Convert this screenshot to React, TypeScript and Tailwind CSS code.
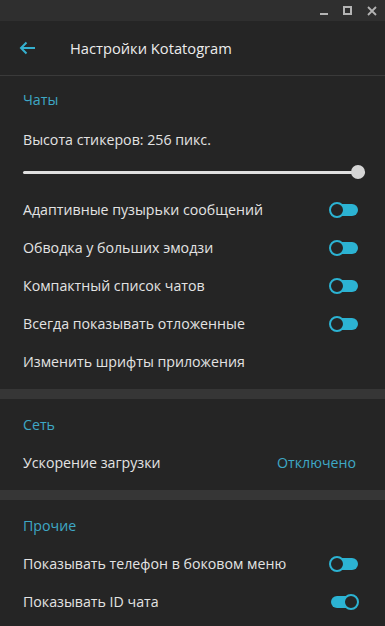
import React from "react";

const font = { fontFamily: '"Open Sans", "Noto Sans", sans-serif' };

function Toggle({ on }: { on: boolean }) {
  return (
    <div className="relative w-[30px] h-[16px] flex items-center">
      <div className="absolute left-[2px] right-[1px] h-[12px] rounded-full bg-[#2cb3d3]" />
      <div
        className={
          "absolute w-[16px] h-[16px] rounded-full border-2 border-[#2cb3d3] bg-[#252525] " +
          (on ? "right-0" : "left-0")
        }
      />
    </div>
  );
}

function ToggleRow({ label, on }: { label: string; on: boolean }) {
  return (
    <div className="h-[38px] flex items-center justify-between pl-[23px] pr-[26px]">
      <span className="text-[14.2px] text-[#e3e3e3]">{label}</span>
      <Toggle on={on} />
    </div>
  );
}

function SectionTitle({ children, first }: { children: React.ReactNode; first?: boolean }) {
  return (
    <div className={"h-[38px] flex items-center pl-[23px] text-[14.2px] text-[#3ea8c6] " + (first ? "mt-[5px]" : "mt-[7px]")}>
      {children}
    </div>
  );
}

export default function App() {
  return (
    <div className="w-[385px] h-[626px] bg-[#252525] overflow-hidden flex flex-col" style={font}>
      <div className="h-[21px] bg-[#2f2f2f] flex items-center justify-end">
        <div className="w-[23px] h-[21px] flex items-center justify-center">
          <div className="w-[8px] h-[2px] bg-[#b4b4b4] mt-[6px]" />
        </div>
        <div className="w-[24px] h-[21px] flex items-center justify-center">
          <div className="w-[9px] h-[9px] border-2 border-[#b4b4b4]" />
        </div>
        <div className="w-[26px] h-[21px] flex items-center justify-center">
          <svg width="10" height="10" viewBox="0 0 10 10">
            <path d="M1 1L9 9M9 1L1 9" stroke="#b4b4b4" strokeWidth="1.8" />
          </svg>
        </div>
      </div>
      <div className="h-[55px] flex items-center border-b border-[#3a3a3a]">
        <div className="w-[70px] flex items-center pl-[19px]">
          <svg width="17" height="14" viewBox="0 0 17 14">
            <path d="M16 7H2M7.5 1.5L2 7L7.5 12.5" stroke="#35b0cf" strokeWidth="2" fill="none" />
          </svg>
        </div>
        <span className="text-[14.7px] text-[#ececec]">Настройки Kotatogram</span>
      </div>

      <SectionTitle first>Чаты</SectionTitle>
      <div className="mt-[5px] h-[32px] flex items-center pl-[23px] text-[14.2px] text-[#e3e3e3]">
        Высота стикеров: 256 пикс.
      </div>
      <div className="h-[32px] flex items-center pl-[23px] pr-[20px]">
        <div className="relative flex-1 h-[3px] bg-[#e0e0e0] rounded-full">
          <div className="absolute right-0 top-1/2 -translate-y-1/2 w-[14px] h-[14px] rounded-full bg-[#d5d5d5]" />
        </div>
      </div>
      <div className="mt-[3px]" />
      <ToggleRow label="Адаптивные пузырьки сообщений" on={false} />
      <ToggleRow label="Обводка у больших эмодзи" on={false} />
      <ToggleRow label="Компактный список чатов" on={false} />
      <ToggleRow label="Всегда показывать отложенные" on={false} />
      <div className="h-[38px] flex items-center pl-[23px] text-[14.2px] text-[#e3e3e3]">
        Изменить шрифты приложения
      </div>
      <div className="mt-[8px] h-[10px] bg-[#363636]" />

      <SectionTitle>Сеть</SectionTitle>
      <div className="h-[38px] flex items-center justify-between pl-[23px] pr-[29px] text-[14.2px]">
        <span className="text-[#e3e3e3]">Ускорение загрузки</span>
        <span className="text-[#3ea8c6]">Отключено</span>
      </div>
      <div className="mt-[8px] h-[10px] bg-[#363636]" />

      <SectionTitle>Прочие</SectionTitle>
      <ToggleRow label="Показывать телефон в боковом меню" on={false} />
      <ToggleRow label="Показывать ID чата" on={true} />
    </div>
  );
}
